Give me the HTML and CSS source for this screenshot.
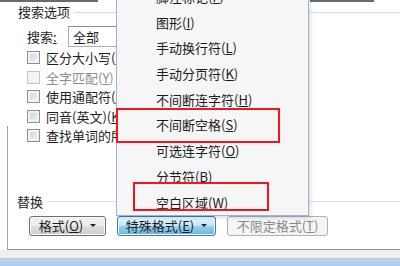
FILE: index.html
```html
<!DOCTYPE html>
<html lang="zh-CN">
  <head>
    <meta charset="UTF-8" />
    <title>查找和替换</title>
    <link rel="stylesheet" href="styles.css">
  </head>
  <body>
    <div class="page">
      <div class="topline">
        <span class="seg seg-left"></span>
        <span class="seg seg-right"></span>
      </div>

      <div class="group-head"><span>搜索选项</span></div>

      <div class="search-row">
        <span class="label">搜索<u>:</u></span>
        <div class="combo">全部</div>
      </div>

      <ul class="checks">
        <li><span class="box"></span>区分大小写(<u>H</u>)</li>
        <li class="disabled"><span class="box"></span>全字匹配(<u>Y</u>)</li>
        <li><span class="box"></span>使用通配符(<u>U</u>)</li>
        <li><span class="box"></span>同音(英文)(<u>K</u>)</li>
      </ul>

      <div class="lower">
        <ul class="checks">
          <li><span class="box"></span>查找单词的所有形式(英文)(<u>W</u>)</li>
        </ul>
        <div class="group-head replace"><span>替换</span></div>
        <div class="buttons">
          <button class="btn"><span>格式(<u>O</u>)</span><span class="arrow"></span></button>
          <button class="btn btn-hot"><span>特殊格式(<u>E</u>)</span><span class="arrow"></span></button>
          <button class="btn btn-off" disabled><span>不限定格式(<u>T</u>)</span></button>
        </div>
      </div>
      <div class="band"></div>
      <div class="frame"></div>

      <!-- menu opened from 特殊格式 -->
      <ul class="menu">
        <li>脚注标记(<u>F</u>)</li>
        <li>图形(<u>I</u>)</li>
        <li>手动换行符(<u>L</u>)</li>
        <li>手动分页符(<u>K</u>)</li>
        <li>不间断连字符(<u>H</u>)</li>
        <li>不间断空格(<u>S</u>)</li>
        <li>可选连字符(<u>O</u>)</li>
        <li>分节符(<u>B</u>)</li>
        <li>空白区域(<u>W</u>)</li>
      </ul>

      <div class="mark mark-space"></div>
      <div class="mark mark-white"></div>
    </div>
  </body>
</html>
```

FILE: styles.css
```css
/* Reset */
* {
  box-sizing: border-box;
}

body {
  margin: 0;
  background: #fff;
}

ul {
  list-style: none;
  margin: 0;
  padding: 0;
}

u {
  text-decoration: underline;
  text-underline-offset: 1px;
}

/* Page */
.page {
  position: relative;
  width: 400px;
  height: 266px;
  overflow: hidden;
  font-family: "Noto Sans CJK SC", "Microsoft YaHei", sans-serif;
  font-size: 13px;
  color: #1e1e1e;
}

.topline {
  display: flex;
  height: 2px;
}

.topline .seg {
  height: 2px;
  background: #6a6a6a;
}

.seg-left {
  width: 98px;
}

.seg-right {
  width: 64px;
  margin-left: 212px;
}

.group-head {
  display: flex;
  align-items: center;
  gap: 4px;
  height: 16px;
  line-height: 16px;
  margin-top: 2px;
  padding-left: 18px;
}

.group-head::after {
  content: '';
  flex: 1;
  height: 1px;
  background: #d5dfe5;
}

.search-row {
  display: flex;
  align-items: center;
  margin-top: 6px;
  padding-left: 27px;
  height: 21px;
}

.search-row .label {
  width: 41px;
}

.combo {
  width: 70px;
  height: 21px;
  line-height: 19px;
  padding-left: 4px;
  border: 1px solid #abadb3;
  border-top-color: #8e9297;
}

.checks {
  margin-top: 1px;
}

.checks li {
  display: flex;
  align-items: center;
  height: 19.5px;
  padding-left: 27px;
  white-space: nowrap;
}

.checks .box {
  width: 13px;
  height: 13px;
  margin-right: 6px;
  border: 1px solid #8e8f8f;
  background: linear-gradient(135deg, #cbcfd5, #f7f7f7);
  box-shadow: inset 0 0 0 2px #f3f3f3;
}

.checks .disabled {
  color: #8d8d8d;
}

.checks .disabled .box {
  border-color: #c4c4c4;
  background: #f4f4f4;
  box-shadow: none;
}

/* Lower frame */
.lower {
  margin-left: 7px;
  padding-bottom: 13px;
  border-left: 1px solid #a4a4a4;
  border-bottom: 1px solid #8f8f8f;
}

.lower .checks {
  margin-top: 0;
}

.lower .checks li {
  padding-left: 19px;
}

.group-head.replace {
  margin-top: 48px;
  padding-left: 9px;
}

.buttons {
  display: flex;
  gap: 11px;
  margin-top: 6px;
  padding-left: 21px;
}

.btn {
  display: flex;
  align-items: center;
  justify-content: center;
  gap: 7px;
  height: 20px;
  padding: 0;
  font: inherit;
  color: #1e1e1e;
  white-space: nowrap;
  border: 1px solid #707070;
  border-radius: 3px;
  background: linear-gradient(#f2f2f2 0%, #ebebeb 50%, #dddddd 51%, #cfcfcf 100%);
  box-shadow: inset 0 0 0 1px #fbfbfb;
}

.buttons .btn:nth-child(1) {
  width: 77px;
}

.btn-hot {
  width: 99px;
  border-color: #3c7fb1;
  background: linear-gradient(#e5f4fc 0%, #c4e5f6 50%, #98d1ef 51%, #6db3da 100%);
  box-shadow: inset 0 0 0 1px #e9f6fd;
}

.btn-off {
  width: 101px;
  color: #8a8a8a;
  border-color: #adb2b5;
  background: #f4f4f4;
  box-shadow: none;
}

.arrow {
  width: 0;
  height: 0;
  border-left: 3px solid transparent;
  border-right: 3px solid transparent;
  border-top: 3px solid #222;
}

.band {
  height: 9px;
  background: #f0f0f0;
  border-bottom: 1px solid #c9c9c9;
}

.frame {
  height: 10px;
  background: linear-gradient(#bcd6f1, #a9c9ec);
}

/* Popup menu */
.menu {
  position: absolute;
  left: 116px;
  top: -17px;
  width: 193px;
  border: 1px solid #9db4d8;
  background: #f6f6f6;
  box-shadow: 2px 2px 3px rgba(0, 0, 0, 0.12);
}

.menu li {
  height: 25.7px;
  line-height: 25.7px;
  padding-left: 39px;
  color: #1b1b1b;
  white-space: nowrap;
}

/* Red highlight boxes */
.mark {
  position: absolute;
  border: 2px solid #f3161e;
}

.mark-space {
  left: 116px;
  top: 108px;
  width: 164px;
  height: 35px;
}

.mark-white {
  left: 133px;
  top: 182px;
  width: 136px;
  height: 29px;
}
```
